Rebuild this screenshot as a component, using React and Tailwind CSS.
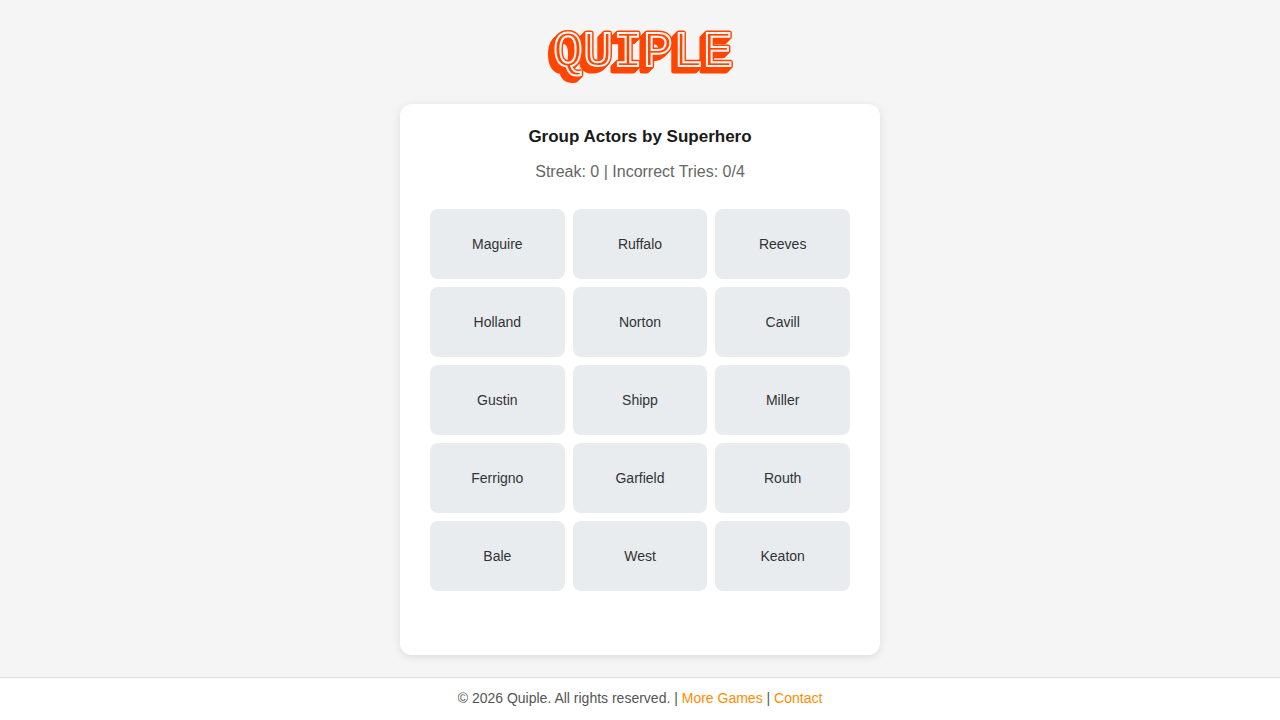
const ACTORS = [
  "Maguire", "Ruffalo", "Reeves",
  "Holland", "Norton", "Cavill",
  "Gustin", "Shipp", "Miller",
  "Ferrigno", "Garfield", "Routh",
  "Bale", "West", "Keaton",
];

const SHADE_STEPS = [0, 1, 2, 3, 4, 5];

function Logo() {
  return (
    <h1>
      <svg
        width="192"
        height="56"
        viewBox="0 0 192 56"
        className="block overflow-visible font-['Liberation_Mono',monospace] text-[50px]"
      >
        <defs>
          <text id="wordmark" x="9" y="42">QUIPLE</text>
        </defs>
        <g fill="#ff4500" stroke="#ff4500" strokeWidth="5" strokeLinejoin="round">
          {SHADE_STEPS.map((step) => (
            <use key={step} href="#wordmark" x={-step} y={step} />
          ))}
        </g>
        <use href="#wordmark" fill="#ff4500" stroke="#f5f5f5" strokeWidth="2" />
      </svg>
    </h1>
  );
}

function Footer() {
  return (
    <footer className="border-t border-[#dddddd] bg-white pt-[10px] pb-3 text-center text-sm leading-5 text-[#555555]">
      © 2026 Quiple. All rights reserved. |{" "}
      <a href="#games" className="text-[#ff8c00]">More Games</a> |{" "}
      <a href="#contact" className="text-[#ff8c00]">Contact</a>
    </footer>
  );
}

export default function App() {
  return (
    <div className="flex min-h-screen flex-col bg-[#f5f5f5] font-['Liberation_Sans',Arial,sans-serif]">
      <header className="flex justify-center py-6">
        <Logo />
      </header>
      <main className="flex grow justify-center pb-[22px]">
        <section className="w-full max-w-[480px] rounded-xl bg-white px-[30px] pt-[21px] shadow-[0_2px_10px_rgba(0,0,0,0.1)]">
          <h2 className="text-center text-[17px] leading-6 font-bold text-[#1a1a1a]">
            Group Actors by Superhero
          </h2>
          <p className="mt-[11px] text-center text-base text-[#666666]">
            Streak: 0 | Incorrect Tries: 0/4
          </p>
          <div className="mt-[25px] grid grid-cols-3 gap-2">
            {ACTORS.map((name) => (
              <button
                key={name}
                type="button"
                className="h-[70px] cursor-pointer rounded-lg bg-[#e8ecef] text-sm text-[#333333]"
              >
                {name}
              </button>
            ))}
          </div>
        </section>
      </main>
      <Footer />
    </div>
  );
}
